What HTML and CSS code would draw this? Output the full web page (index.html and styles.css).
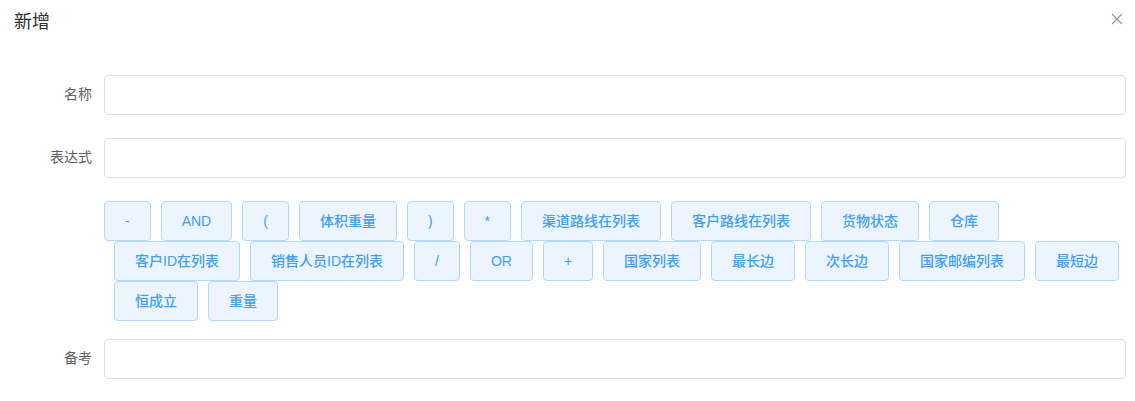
FILE: index.html
```html
<!DOCTYPE html>
<html lang="zh-CN">
<head>
<meta charset="utf-8">
<title>新增</title>
<link rel="stylesheet" href="styles.css">
</head>
<body>
<div class="dialog">
  <div class="dialog-header">
    <span class="dialog-title">新增</span>
    <button class="dialog-close" type="button" aria-label="Close">
      <svg width="12" height="12" viewBox="0 0 12 12"><path d="M1 1 L11 11 M11 1 L1 11" stroke="#909399" stroke-width="1.1" fill="none"/></svg>
    </button>
  </div>
  <div class="dialog-body">
    <div class="form-item">
      <label class="form-label">名称</label>
      <div class="form-content"><input class="text-input" type="text"></div>
    </div>
    <div class="form-item">
      <label class="form-label">表达式</label>
      <div class="form-content"><input class="text-input" type="text"></div>
    </div>
    <div class="form-item form-item-buttons">
      <div class="form-label"></div>
      <div class="form-content">
        <div class="btn-group">
          <button class="btn" type="button">-</button>
          <button class="btn" type="button">AND</button>
          <button class="btn" type="button">(</button>
          <button class="btn" type="button">体积重量</button>
          <button class="btn" type="button">)</button>
          <button class="btn" type="button">*</button>
          <button class="btn" type="button">渠道路线在列表</button>
          <button class="btn" type="button">客户路线在列表</button>
          <button class="btn" type="button">货物状态</button>
          <button class="btn" type="button">仓库</button>
          <span class="line-break"></span>
          <button class="btn" type="button">客户ID在列表</button>
          <button class="btn" type="button">销售人员ID在列表</button>
          <button class="btn" type="button">/</button>
          <button class="btn" type="button">OR</button>
          <button class="btn" type="button">+</button>
          <button class="btn" type="button">国家列表</button>
          <button class="btn" type="button">最长边</button>
          <button class="btn" type="button">次长边</button>
          <button class="btn" type="button">国家邮编列表</button>
          <button class="btn" type="button">最短边</button>
          <span class="line-break"></span>
          <button class="btn" type="button">恒成立</button>
          <button class="btn" type="button">重量</button>
        </div>
      </div>
    </div>
    <div class="form-item">
      <label class="form-label">备考</label>
      <div class="form-content"><input class="text-input" type="text"></div>
    </div>
  </div>
</div>
</body>
</html>
```
FILE: styles.css
```css
* { box-sizing: border-box; }
html, body {
  margin: 0;
  padding: 0;
  background: #ffffff;
  font-family: "Liberation Sans", "Noto Sans CJK SC", sans-serif;
  color: #606266;
}
.dialog {
  width: 1135px;
  height: 401px;
  background: #ffffff;
}
.dialog-header {
  display: flex;
  justify-content: space-between;
  align-items: flex-start;
  padding: 10px 12px 0 14px;
  height: 34px;
}
.dialog-title {
  font-size: 18px;
  line-height: 24px;
  color: #303133;
}
.dialog-close {
  border: 0;
  background: transparent;
  padding: 0;
  margin-top: 3px;
  width: 12px;
  height: 12px;
  display: flex;
  cursor: pointer;
}
.dialog-body {
  padding: 41px 9px 0 0;
}
.form-item {
  display: flex;
  margin-bottom: 23px;
}
.form-item-buttons {
  margin-bottom: 18px;
}
.form-label {
  width: 104px;
  flex: none;
  padding-right: 12px;
  text-align: right;
  font-size: 14px;
  line-height: 38px;
  color: #606266;
}
.form-content {
  flex: 1;
  min-width: 0;
}
.text-input {
  display: block;
  width: 100%;
  height: 40px;
  border: 1px solid #dcdfe6;
  border-radius: 4px;
  background: #ffffff;
  outline: none;
  padding: 0 15px;
  font-size: 14px;
  font-family: inherit;
}
.btn-group {
  display: flex;
  flex-wrap: wrap;
}
.btn {
  height: 40px;
  padding: 0 20px;
  margin-left: 10px;
  border: 1px solid #b3d8ff;
  border-radius: 4px;
  background: #ecf5ff;
  color: #409eff;
  font-family: "Liberation Sans", "Noto Sans CJK SC", sans-serif;
  font-size: 14px;
  font-weight: 500;
  line-height: 1;
  white-space: nowrap;
  cursor: pointer;
}
.btn:first-child {
  margin-left: 0;
}
.line-break {
  flex-basis: 100%;
  height: 0;
}
```
